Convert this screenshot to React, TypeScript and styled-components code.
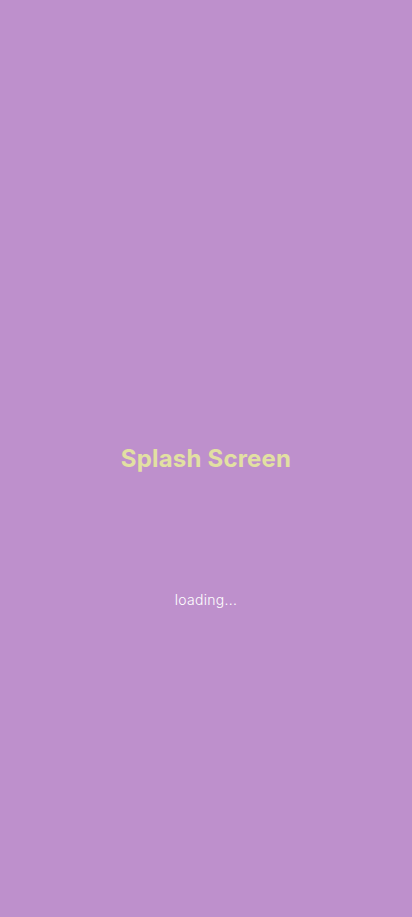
import React from "react";
import styled, { createGlobalStyle } from "styled-components";

const Global = createGlobalStyle`
  html, body { margin: 0; padding: 0; height: 100%; }
  body { background: #be90cc; font-family: Inter, "Noto Sans", sans-serif; }
  #root { height: 100%; }
`;

const Screen = styled.main`
  height: 917px;
  display: grid;
  grid-template-rows: 1fr auto 1fr;
  justify-items: center;
  background: #be90cc;
`;

const Title = styled.h1`
  grid-row: 2;
  margin: 0;
  font-size: 24px;
  line-height: 29px;
  font-weight: 700;
  color: #e2e0a2;
  letter-spacing: 0.2px;
`;

const Loading = styled.p`
  grid-row: 3;
  align-self: start;
  margin: 118px 0 0;
  font-size: 14px;
  line-height: 17px;
  font-weight: 300;
  color: #ffffff;
  letter-spacing: 0.3px;
`;

export default function App() {
  return (
    <>
      <Global />
      <Screen>
        <Title>Splash Screen</Title>
        <Loading>loading...</Loading>
      </Screen>
    </>
  );
}
